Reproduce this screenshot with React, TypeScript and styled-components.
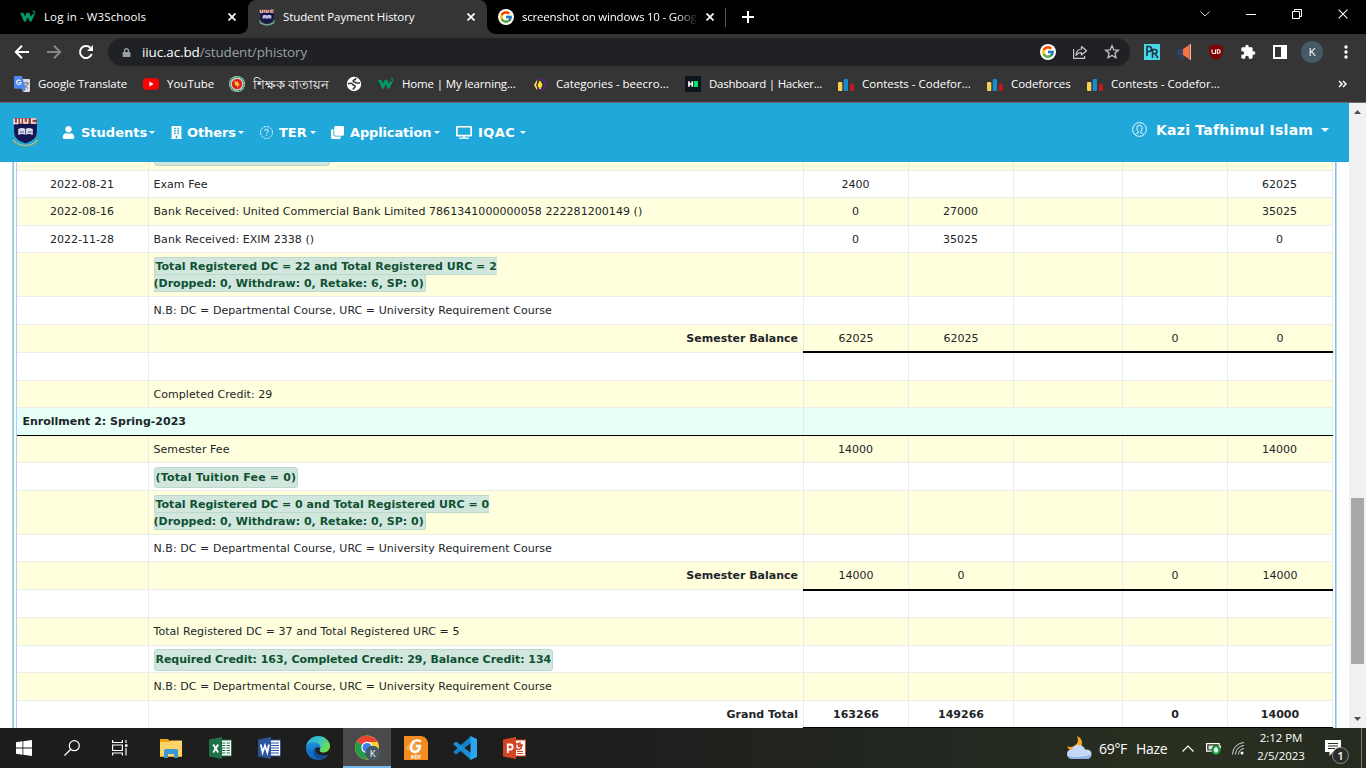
import React from "react";
import styled, { createGlobalStyle } from "styled-components";
import { FcGoogle } from "react-icons/fc";
import { FaUser, FaBuilding, FaClone, FaLock } from "react-icons/fa";
import { MdExtension } from "react-icons/md";

const GlobalStyle = createGlobalStyle`
  * { box-sizing: border-box; }
  body { margin: 0; background: #fff; overflow: hidden; }
`;

const uiFont = `"Open Sans", "Noto Sans", sans-serif`;
const pageFont = `"DejaVu Sans", Verdana, sans-serif`;

const Screen = styled.div`
  width: 1366px;
  height: 768px;
  display: flex;
  flex-direction: column;
  overflow: hidden;
  font-family: ${uiFont};
  svg { display: block; flex: none; }
`;

/* ---------- Browser chrome ---------- */

const TabStrip = styled.div`
  height: 34px;
  flex: none;
  display: flex;
  background: #000;
`;

const Tab = styled.div<{ $width: number; $active?: boolean; $pad: number }>`
  position: relative;
  width: ${(p) => p.$width}px;
  height: 34px;
  padding: 0 0 0 ${(p) => p.$pad}px;
  display: flex;
  align-items: center;
  background: ${(p) => (p.$active ? "#353535" : "transparent")};
  border-radius: 8px 8px 0 0;
  &::before, &::after {
    content: "";
    display: ${(p) => (p.$active ? "block" : "none")};
    position: absolute;
    bottom: 0;
    width: 8px;
    height: 8px;
  }
  &::before { left: -8px; background: radial-gradient(circle at 0 0, #000 7.5px, #353535 8px); }
  &::after { right: -8px; background: radial-gradient(circle at 100% 0, #000 7.5px, #353535 8px); }
`;

const TabTitle = styled.div<{ $width: number; $spacing: number; $fade?: boolean }>`
  width: ${(p) => p.$width}px;
  margin-left: 8px;
  overflow: hidden;
  white-space: nowrap;
  color: #fff;
  font-size: 11.5px;
  line-height: 18px;
  letter-spacing: ${(p) => p.$spacing}px;
  ${(p) => p.$fade && "mask-image: linear-gradient(90deg, #000 88%, transparent);"}
`;

const TabDivider = styled.div`
  width: 1px;
  height: 19px;
  margin: 8px 16px 0 3px;
  background: #555;
`;

const NewTab = styled.div`
  display: flex;
  align-items: center;
  flex: 1;
`;

const WindowControls = styled.div`
  display: flex;
  width: 184px;
  height: 28px;
  & > div { width: 46px; display: flex; align-items: center; justify-content: center; }
`;

const Toolbar = styled.div`
  height: 36px;
  flex: none;
  display: flex;
  align-items: center;
  background: #353535;
  padding-left: 14px;
  gap: 16px;
`;

const AddressBar = styled.div`
  width: 1022px;
  height: 28px;
  margin-left: -2px;
  padding: 0 10px 0 14px;
  border-radius: 14px;
  background: #202124;
  display: flex;
  align-items: center;
`;

const Url = styled.div`
  flex: 1;
  margin-left: 11px;
  color: #9aa0a6;
  font-size: 13.5px;
  letter-spacing: -0.15px;
  line-height: 20px;
  b { font-weight: 400; color: #fff; }
`;

const AddressActions = styled.div`
  display: flex;
  align-items: center;
  gap: 16px;
`;

const Extensions = styled.div`
  display: flex;
  align-items: center;
  gap: 16px;
  margin-left: -2px;
`;

const Avatar = styled.div`
  width: 22px;
  height: 22px;
  margin: 0 -1px 0 -3px;
  border-radius: 50%;
  background: #455a64;
  color: #fff;
  font-size: 11.5px;
  line-height: 22px;
  text-align: center;
`;

const Bookmarks = styled.div`
  height: 33px;
  flex: none;
  display: flex;
  align-items: center;
  gap: 16px;
  padding: 0 19px 4px 14px;
  background: #353535;
  border-bottom: 1px solid #6a6a6a;
`;

const Bookmark = styled.div`
  display: flex;
  align-items: center;
  gap: 8px;
`;

const BookmarkLabel = styled.span<{ $width: number; $spacing: number; $size?: number }>`
  width: ${(p) => p.$width}px;
  white-space: nowrap;
  color: #fff;
  font-size: ${(p) => p.$size ?? 11.5}px;
  line-height: 18px;
  letter-spacing: ${(p) => p.$spacing}px;
`;

const Spacer = styled.div`
  flex: 1;
`;

/* ---------- Web page ---------- */

const Viewport = styled.div`
  height: 625px;
  flex: none;
  display: flex;
  font-family: ${pageFont};
`;

const Page = styled.div`
  width: 1349px;
  height: 625px;
  display: flex;
  flex-direction: column;
  overflow: hidden;
  background: #fff;
`;

const Nav = styled.nav`
  height: 59px;
  flex: none;
  display: flex;
  align-items: center;
  padding: 0 20px 0 12px;
  background: #21a8da;
  color: #fff;
  font-weight: 700;
`;

const NavMenu = styled.div`
  display: flex;
  margin-left: 23px;
`;

const NavItem = styled.div<{ $width: number }>`
  width: ${(p) => p.$width}px;
  height: 18px;
  display: flex;
  align-items: center;
`;

const NavLabel = styled.span<{ $width: number; $gap: number; $spacing?: number }>`
  width: ${(p) => p.$width}px;
  margin-left: ${(p) => p.$gap}px;
  margin-right: 4px;
  font-size: 13px;
  letter-spacing: ${(p) => p.$spacing ?? 0}px;
  white-space: nowrap;
`;

const Caret = styled.span<{ $size: number }>`
  border: ${(p) => p.$size}px solid transparent;
  border-top-color: #fff;
  border-bottom: 0;
`;

const UserMenu = styled.div`
  display: flex;
  align-items: center;
  height: 20px;
  margin-bottom: 6px;
`;

const UserName = styled.span`
  width: 157px;
  margin: 0 8px 0 9px;
  font-size: 14px;
  letter-spacing: 0.23px;
  white-space: nowrap;
`;

const Frame = styled.main`
  width: 1325px;
  height: 566px;
  margin-left: 12px;
  border: solid #c9d3d8;
  border-width: 0 1px;
`;

const FrameInner = styled.div`
  height: 566px;
  padding: 0 2px;
  border: solid #70cbee;
  border-width: 0 1px;
`;

const Table = styled.div`
  height: 566px;
  width: 1317px;
  border-left: 1px solid #bccaf8;
  color: #212529;
  font-size: 11px;
  line-height: 16.5px;
`;

const Row = styled.div<{ $height: number; $tone: Tone }>`
  display: grid;
  grid-template-columns: 132px 655px 105px 105px 109px 105px 105px;
  height: ${(p) => p.$height}px;
  background: ${(p) => ({ white: "#fff", cream: "#ffffdd" })[p.$tone]};
`;

const Cell = styled.div<{ $align?: string; $bold?: boolean; $total?: number; $clip?: boolean }>`
  display: flex;
  align-items: ${(p) => (p.$clip ? "flex-end" : "center")};
  justify-content: ${(p) => p.$align || "center"};
  padding: ${(p) => (p.$clip ? "0 5px 4px 4.5px" : p.$align ? "2px 5px 0 4.5px" : "2px 6px 0 5px")};
  font-weight: ${(p) => (p.$bold ? 700 : 400)};
  letter-spacing: ${(p) => (p.$bold ? 0 : p.$align ? 0.055 : 0)}px;
  border: solid #ececec;
  border-width: 0 1px 1px 0;
  min-width: 0;
  overflow: hidden;
  white-space: nowrap;
  ${(p) =>
    p.$total &&
    "margin-left: -1px; padding: 2px 5px 0; border-right-width: 0; box-shadow: inset -1px 0 #ececec, inset 1px 0 #ececec;"}
  ${(p) => p.$total === 1 && "border-bottom: 2px solid #000; padding-top: 3px;"}
  ${(p) =>
    p.$total === 2 &&
    "border-bottom-color: #000; box-shadow: inset -1px 0 #ececec, inset 1px 0 #ececec, 0 1px #000; position: relative;"}
`;

const SectionRow = styled.div`
  display: grid;
  grid-template-columns: 787px 529px;
  height: 28px;
  background: #e6fff7;
  border-bottom: 1px solid #000;
  font-weight: 700;
  line-height: 27px;
  & > div { padding-left: 5.5px; border-right: 1px solid #e3eeea; }
`;

const Badge = styled.span<{ $spacing?: number }>`
  background: #d1e7dd;
  border: 1px solid #badbcc;
  border-radius: 3px;
  padding: 2px 1px 1px;
  color: #0f5132;
  font-weight: 700;
  letter-spacing: ${(p) => p.$spacing ?? 0}px;
`;

const Scrollbar = styled.div`
  width: 17px;
  height: 625px;
  background: #f1f1f1;
  display: flex;
  flex-direction: column;
  align-items: center;
`;

const ScrollArrow = styled.div<{ $down?: boolean }>`
  width: 17px;
  height: 17px;
  display: flex;
  align-items: center;
  justify-content: center;
  transform: ${(p) => (p.$down ? "rotate(180deg)" : "none")};
`;

const Thumb = styled.div`
  width: 13px;
  height: 166px;
  margin: 378px 0 47px;
  background: #a8a8a8;
`;

/* ---------- Taskbar ---------- */

const Taskbar = styled.div`
  height: 40px;
  flex: none;
  display: flex;
  align-items: stretch;
  background: linear-gradient(90deg, #1d1d1d 0, #1e1e1d 560px, #222620 900px, #2a3020 1200px, #262b20 100%);
  color: #fff;
`;

const TaskButton = styled.div<{ $active?: boolean }>`
  width: 48px;
  margin-right: 1px;
  display: flex;
  align-items: center;
  justify-content: center;
  background: ${(p) => (p.$active ? "#4a4a4a" : "transparent")};
  box-shadow: ${(p) => (p.$active ? "inset 0 -2px #76b9ed" : "none")};
`;

const SystemButtons = styled.div`
  display: flex;
  width: 147px;
  ${TaskButton} { margin-right: 0; }
`;

const Weather = styled.div`
  display: flex;
  align-items: center;
  font-size: 14px;
  letter-spacing: -0.3px;
  span { width: 37px; margin-left: 7px; white-space: nowrap; }
  span + span { margin-left: 0; width: 46px; }
`;

const Tray = styled.div`
  display: flex;
  align-items: center;
`;

const TrayIcons = styled.div`
  display: flex;
  align-items: center;
  gap: 10px;
  margin-left: 11px;
`;

const Clock = styled.div`
  width: 64px;
  margin-left: 4px;
  text-align: center;
  font-size: 11.5px;
  letter-spacing: -0.05px;
  line-height: 18px;
  padding-bottom: 2px;
`;

const Notifications = styled.div`
  position: relative;
  width: 24px;
  height: 24px;
  margin: 8px 12px 0 12px;
`;

const NotificationCount = styled.div`
  position: absolute;
  left: 7px;
  top: 7px;
  width: 17px;
  height: 17px;
  border: 1px solid #8b8b8b;
  border-radius: 50%;
  background: #2b2b2b;
  font-size: 11.5px;
  font-weight: 600;
  line-height: 15px;
  text-align: center;
`;

const ShowDesktop = styled.div`
  width: 5px;
  height: 40px;
  border-left: 1px solid #7b7d76;
`;

/* ---------- Icons ---------- */

const CloseIcon = ({ size = 8, stroke = 1.7 }: { size?: number; stroke?: number }) => (
  <svg width={size} height={size} viewBox="0 0 8 8">
    <path d="M.5.5l7 7M7.5.5l-7 7" stroke="#fff" strokeWidth={stroke} fill="none" />
  </svg>
);

const W3Icon = () => (
  <svg width="16" height="16" viewBox="0 0 16 16">
    <path d="M0 3.800h3.300L5 7.600l1.600-3.800h2.600l1.600 3.800L12.300 5.500l2.400.3-3.500 7h-1.400L7.700 8.300l-2 4.500H4.200z" fill="#059862" />
    <path d="M12.600 2.300h2.600L13.800 3.800c2 .1 1.800 2.400-1 1.700" stroke="#059862" strokeWidth=".9" fill="none" />
  </svg>
);

const Crest = ({ width, height }: { width: number; height: number }) => (
  <svg width={width} height={height} viewBox="0 0 26 31" preserveAspectRatio="none">
    <path d="M0 19q3 3 4 6l9 4 9-4q1-3 4-6l-1.500 8L13 31 1.500 27z" fill="#4f9a85" />
    <path d="M1.500 23q3 5 11.500 5.500Q21.500 28 24.500 23" stroke="#b9dac4" strokeWidth="1.500" strokeDasharray="1.500 1" fill="none" />
    <path d="M2 1h22v14q0 8-11 11.500Q2 23 2 15z" fill="#15164f" />
    <path d="M2 1h22v6H2z" fill="#8f4138" />
    <path d="M2 1.500v5h3.500v-5M8.500 1.500v5M11.500 1.500v4.500h3.500V1.500M23.500 2H19v4h4.500" stroke="#f7e9e6" strokeWidth="1.500" fill="none" />
    <path d="M6 12q4-2 7 0 3-2 7 0v6q-4-2-7 0-3-2-7 0z" fill="#d9dbea" />
    <path d="M13 12v6M7.500 15h4M15 15h4" stroke="#34367a" strokeWidth=".8" />
  </svg>
);

const GoogleDot = () => (
  <svg width="16" height="16" viewBox="0 0 16 16">
    <circle cx="8" cy="8" r="8" fill="#fff" />
    <FcGoogle x="1" y="1" size={14} />
  </svg>
);

const BackIcon = ({ color, flip }: { color: string; flip?: boolean }) => (
  <svg width="16" height="16" viewBox="0 0 16 16">
    <path
      d="M15 8H2M8 1.800L1.800 8 8 14.200"
      stroke={color}
      strokeWidth="2"
      fill="none"
      transform={flip ? "matrix(-1 0 0 1 16 0)" : undefined}
    />
  </svg>
);

const ReloadIcon = () => (
  <svg width="16" height="16" viewBox="0 0 16 16">
    <path d="M13.700 10a6 6 0 1 1-1.400-6.200" stroke="#fff" strokeWidth="2" fill="none" />
    <path d="M15 1v6H9z" fill="#fff" />
  </svg>
);

const ShareIcon = () => (
  <svg width="16" height="16" viewBox="0 0 16 16" fill="none" stroke="#c4c7c5" strokeWidth="1.2">
    <path d="M1.600 5v9.400h11V12" />
    <path d="M9.500 2.500l5 4.300-5 4.200V8.700C7 8.700 5.200 9.500 4 11.400c.3-3.500 2.200-6 5.500-6.400z" strokeLinejoin="round" />
  </svg>
);

const StarIcon = () => (
  <svg width="16" height="16" viewBox="0 0 16 16">
    <path
      d="M8 1.700l1.850 4.200 4.500.45-3.400 3 1 4.450L8 11.500l-3.950 2.300 1-4.450-3.400-3 4.500-.45z"
      fill="none"
      stroke="#c4c7c5"
      strokeWidth="1.300"
    />
  </svg>
);

const PrIcon = () => (
  <svg width="16" height="16" viewBox="0 0 16 16">
    <rect width="16" height="16" fill="#4dd5ea" />
    <path d="M3 12V2.500h2q2.500 0 2.500 2.500T5 7.500H3M8.500 14V5.500h2.200q2.300 0 2.300 2t-2.300 2H8.500m2.500 0l3 4.500" stroke="#17343e" strokeWidth="1.600" fill="none" />
  </svg>
);

const MegaphoneIcon = () => (
  <svg width="16" height="16" viewBox="0 0 16 16">
    <path d="M1.500 5H8v6H7l1 4H5l-1.500-4h-2Q0 8 1.500 5z" fill="#2f4668" />
    <path d="M7 5l6-4v14l-6-4z" fill="#ff7043" />
    <path d="M13.500 0h1.500v16h-1.500z" fill="#ffb199" />
  </svg>
);

const ShieldIcon = () => (
  <svg width="16" height="16" viewBox="0 0 16 16">
    <path d="M8 0q3 2 7 2v5q0 6-7 9-7-3-7-9V2q4 0 7-2z" fill="#800000" />
    <path d="M4 5.500V8q0 1.500 1.500 1.500H7.500V5.500M9.300 5.800h1.200q1.700 0 1.700 1.700t-1.700 1.700H9.300z" stroke="#fff" strokeWidth="1.100" fill="none" />
  </svg>
);

const SidePanelIcon = () => (
  <svg width="16" height="16" viewBox="0 0 16 16">
    <path d="M1 1h14v14H1zM3 3v10h6V3z" fill="#fff" fillRule="evenodd" />
  </svg>
);

const DotsIcon = () => (
  <svg width="16" height="16" viewBox="0 0 16 16" fill="#fff">
    <circle cx="8" cy="3" r="1.700" />
    <circle cx="8" cy="8" r="1.700" />
    <circle cx="8" cy="13" r="1.700" />
  </svg>
);

const TranslateIcon = () => (
  <svg width="16" height="16" viewBox="0 0 16 16">
    <path d="M6 3h9q1 0 1 1v11q0 1-1 1H9z" fill="#dadce0" />
    <path d="M9 7h6M12 6v1M14 7q-1 3.500-4 5M10.500 8.500q1 2.500 3.500 4" stroke="#70777d" fill="none" />
    <path d="M1 0h7l3.500 12.800H1q-1 0-1-1V1q0-1 1-1z" fill="#4a87ee" />
    <path d="M9 12.800h2.500L9.500 16z" fill="#3467d6" />
    <path d="M6.500 4.800A2.200 2.200 0 1 0 7 6.500H5" stroke="#fff" fill="none" strokeWidth="1.100" />
  </svg>
);

const YouTubeIcon = () => (
  <svg width="16" height="16" viewBox="0 0 16 16">
    <rect y="2.300" width="16" height="11.500" rx="3" fill="#f00" />
    <path d="M6.400 5.600v4.900L10.600 8z" fill="#fff" />
  </svg>
);

const SealIcon = () => (
  <svg width="16" height="16" viewBox="0 0 16 16">
    <circle cx="8" cy="8" r="8" fill="#d7e8dd" />
    <circle cx="8" cy="8" r="6.900" fill="none" stroke="#25865b" strokeWidth="1.300" strokeDasharray="2 .5" />
    <circle cx="8" cy="8" r="5.300" fill="#df2026" />
    <path d="M5.500 4.500l2 1.500 1.500-.5.500 2 1.500 1-1.500 1-1 2-1-2-1.500-.5z" fill="#f4cb22" />
  </svg>
);

const GlobeIcon = () => (
  <svg width="16" height="16" viewBox="0 0 16 16">
    <circle cx="8" cy="8" r="7.200" fill="#fff" />
    <path d="M2 8q3-1.500 4.500 0 .5 1.500 2 1.500 1.500 1-.5 2.500l-1 1.500M9.500 2q.5 1.500-1 1.800-2 .5-1 2 2 0 2.500 1.200h4" stroke="#353535" strokeWidth="1.600" fill="none" />
  </svg>
);

const BeeIcon = () => (
  <svg width="16" height="16" viewBox="0 0 16 16">
    <path d="M7 3.500h4.500L14 8.500l-2.500 5H7" fill="none" stroke="#5b2386" strokeWidth="1.500" />
    <path d="M5 4.500L2.500 9 5 13.500M8 5l-2 4 2 4 2-4z" fill="#ffe135" stroke="#ffe135" strokeWidth="1" />
    <path d="M6.500 5L4.500 9l2 4" stroke="#5b2386" fill="none" />
  </svg>
);

const HackerRankIcon = () => (
  <svg width="16" height="16" viewBox="0 0 16 16">
    <rect width="16" height="16" fill="#0e141e" />
    <path d="M4 5.200v5.600M7.300 5.200v5.600M4 8h3.300" stroke="#fff" strokeWidth="1.700" />
    <rect x="9" y="5" width="4" height="6" fill="#00ea64" />
  </svg>
);

const BarsIcon = () => (
  <svg width="16" height="16" viewBox="0 0 16 16">
    <rect x="0" y="6" width="4.300" height="9" rx="1" fill="#f6cf55" />
    <rect x="5.700" y="3" width="4.300" height="12" rx="1" fill="#198bd0" />
    <rect x="11.700" y="7.500" width="4.300" height="7.500" rx="1" fill="#b71c24" />
  </svg>
);

const DashedQuestionIcon = () => (
  <svg width="13" height="13" viewBox="0 0 13 13" fill="none" stroke="#fff">
    <circle cx="6.500" cy="6.500" r="6" strokeWidth=".9" strokeDasharray="2.200 .9" />
    <path d="M4.700 5q0-1.700 1.800-1.700T8.300 5q0 1-1.100 1.500-.7.400-.7 1.200M6.500 8.900v1" strokeWidth=".9" />
  </svg>
);

const DesktopIcon = () => (
  <svg width="16" height="13" viewBox="0 0 16 13">
    <path d="M1 0h14q1 0 1 1v8.500q0 1-1 1H1q-1 0-1-1V1q0-1 1-1zm.700 1.600v7.200h12.600V1.600z" fill="#fff" fillRule="evenodd" />
    <path d="M7 10h2v1.500h4V13H3v-1.500h4z" fill="#d9f0fa" />
  </svg>
);

const UserCircleIcon = () => (
  <svg width="15" height="15" viewBox="0 0 15 15" fill="none" stroke="#fff" strokeWidth=".9">
    <circle cx="7.500" cy="7.500" r="6.900" />
    <path d="M3.500 12.500q.500-1.200 2.800-1.700v-1Q4.900 8.500 4.900 5.800q0-2.600 2.600-2.600t2.600 2.600q0 2.700-1.400 4v1q2.300.500 2.800 1.700" />
  </svg>
);

const FolderIcon = () => (
  <svg width="22" height="20" viewBox="0 0 22 20">
    <path d="M0 1h8l2 2h12v16H0z" fill="#e9a60e" />
    <path d="M0 4h9l2-1.500h11V18H0z" fill="#fdd367" />
    <path d="M4 20v-7q0-2 2-2h10q2 0 2 2v7h-4v-4H8v4z" fill="#3a97dc" />
  </svg>
);

const OfficeIcon = ({ kind }: { kind: "X" | "W" | "P" }) => {
  const color = { X: "#1f7145", W: "#2a5699", P: "#d24625" }[kind];
  const letter = {
    X: "M4.200 7.500l5 8M9.200 7.500l-5 8",
    W: "M2.800 7.500l1.800 8L7 8.500l2.300 7 1.700-8",
    P: "M4.800 16V7.500h2.500q2.400 0 2.400 2.500T7.300 12.500H4.800",
  }[kind];
  return (
    <svg width="23" height="22" viewBox="0 0 23 22">
      <rect x="11" y="3" width="11.500" height="16" fill="#fff" stroke={color} />
      {kind === "P" ? (
        <>
          <path d="M15.500 6.500a3 3 0 1 0 3 3h-3zM17 5v3h3" fill="none" stroke={color} strokeWidth="1.400" />
          <path d="M14 14.500h6M14 16.500h6" stroke={color} />
        </>
      ) : (
        <path d="M13 6h8M13 8.500h8M13 11h8M13 13.500h8M13 16h8" stroke={color} strokeWidth="1.200" />
      )}
      {kind === "X" && <path d="M17 4v14" stroke="#fff" />}
      <path d="M0 2.500L13 0v22L0 19.500z" fill={color} />
      <path d={letter} stroke="#fff" strokeWidth="1.800" fill="none" />
    </svg>
  );
};

const EdgeIcon = () => (
  <svg width="24" height="24" viewBox="0 0 24 24">
    <defs>
      <linearGradient id="edgeTop" x1="0" y1="0" x2="1" y2=".5">
        <stop offset="0" stopColor="#2aa7e4" />
        <stop offset=".55" stopColor="#35c1c8" />
        <stop offset="1" stopColor="#6fe04f" />
      </linearGradient>
      <linearGradient id="edgeSide" x1="0" y1="0" x2="0" y2="1">
        <stop offset="0" stopColor="#1b8fdc" />
        <stop offset="1" stopColor="#0b61b8" />
      </linearGradient>
    </defs>
    <path d="M0 11C1 4 6 0 12 0c7 0 12 5 12 10 0 4-3 6.500-6.500 6.500-3.500 0-4.500-1.500-3.500-3C15 10 13 7 8.500 7 4 7 1 9 0 11z" fill="url(#edgeTop)" />
    <path d="M0 12C0 8 4 6 8.500 6.500c4 .2 6.200 3 6 5.500-4-2.500-7 1-5.500 5 2 4.500 8 5 13 2C20 22.500 16 24 12 24 5 24 0 19 0 12z" fill="url(#edgeSide)" />
    <path d="M9.500 11.500C5 16 8 22 13.500 23.500c4-.3 7-2 8.800-5C16.500 21 8 18.500 9.500 11.500z" fill="#134b91" />
  </svg>
);

const ChromeIcon = () => (
  <svg width="26" height="26" viewBox="-1 0 26 26">
    <circle cx="12" cy="12.500" r="12" fill="#fdd134" />
    <path d="M12 12.500L1.600 6.500a12 12 0 0 1 20.800 0.500H12z" fill="#ea4335" />
    <path d="M1.600 6.500A12 12 0 0 0 11 24.400L17 15.500l-5-3z" fill="#239b4c" />
    <circle cx="12" cy="12.500" r="5.700" fill="#fff" />
    <circle cx="12" cy="12.500" r="4.500" fill="#3b7ded" />
    <circle cx="17.700" cy="18.300" r="7.500" fill="#455a64" />
    <text x="17.700" y="21.800" fill="#fff" fontSize="9.500" textAnchor="middle">K</text>
  </svg>
);

const FoxitIcon = () => (
  <svg width="24" height="24" viewBox="0 0 24 24">
    <path d="M0 0h18l6 6v18H0z" fill="#f58a1f" />
    <path d="M19.500 0L24 4.500h-4.500z" fill="#f58a1f" />
    <path d="M1 12l8-8 9 9-6 6z" fill="#f9a653" />
    <path d="M17 5.500q-6-3-9 2-3 7 2.500 8.500 4.500 0 5.500-6h-4" stroke="#fff" strokeWidth="2.400" fill="none" />
    <text x="12" y="22.500" fill="#fff" fontSize="5.500" fontWeight="700" textAnchor="middle">PDF</text>
  </svg>
);

const VsCodeIcon = () => (
  <svg width="24" height="24" viewBox="0 0 24 24">
    <path d="M18 0v7L3 18.500 0 16z" fill="#1480c8" />
    <path d="M18 24v-7L3 5.500 0 8z" fill="#1b8fd6" />
    <path d="M17.500 0L24 3v18l-6.500 3z" fill="#2aa5ee" />
  </svg>
);

const MoonCloudIcon = () => (
  <svg width="25" height="24" viewBox="0 0 25 24">
    <path d="M10 0q3 7-3 10-3 1.500-7 .5Q2 15 8 15q7-1 7-8 0-5-5-7z" fill="#f5a623" />
    <path d="M5.500 23q-5.500-.5-5.500-5t5-4.500Q6.500 8.500 12 9q5 .5 6 4.500 6.500-.500 6.500 4.500 0 4.500-4.500 5z" fill="#c3d8f8" />
    <path d="M1 20q5 2 12 1t11-2.500Q23.500 23 20 23H5.500Q2 23 1 20z" fill="#8fb4ec" />
  </svg>
);

const BatteryIcon = () => (
  <svg width="16" height="14" viewBox="0 0 16 14">
    <path d="M1.600 2.600h12.500v7.500H1.600z" fill="none" stroke="#fff" strokeWidth="1.200" />
    <path d="M3.500 4.500h5v4h-5zM14.500 4.500H16v3h-1.500z" fill="#dfe3dc" />
    <circle cx="11" cy="9" r="4.700" fill="#169b3c" />
    <path d="M11 6q4 3.500 0 5.500-4-2.500 0-5.500zM11 8v4.500" fill="#fff" stroke="#fff" strokeWidth=".6" />
  </svg>
);

const WifiIcon = () => (
  <svg width="14" height="14" viewBox="0 0 14 14" fill="none" stroke="#d5d7d2">
    <path d="M1.500 13.500A12 12 0 0 1 13 1.500M4.500 13.500a9 9 0 0 1 8.500-9M7.500 13.500a6 6 0 0 1 5.500-6" />
    <circle cx="11" cy="12" r="1.500" fill="#fff" stroke="none" />
  </svg>
);

/* ---------- Data ---------- */

type Tone = "white" | "cream";

interface Entry {
  height: number;
  tone: Tone;
  date?: string;
  text?: React.ReactNode;
  values?: string[];
  summary?: boolean;
  total?: number;
  bold?: boolean;
  clip?: boolean;
}

const note = "N.B: DC = Departmental Course, URC = University Requirement Course";

const firstEntries: Entry[] = [
  { height: 9, tone: "cream", text: <Badge $spacing={0.2}>(Total Tuition Fee = 45625)</Badge>, clip: true },
  { height: 27, tone: "white", date: "2022-08-21", text: "Exam Fee", values: ["2400", "", "", "", "62025"] },
  {
    height: 28, tone: "cream", date: "2022-08-16",
    text: "Bank Received: United Commercial Bank Limited 7861341000000058 222281200149 ()",
    values: ["0", "27000", "", "", "35025"],
  },
  { height: 27, tone: "white", date: "2022-11-28", text: "Bank Received: EXIM 2338 ()", values: ["0", "35025", "", "", "0"] },
  {
    height: 44, tone: "cream",
    text: (
      <div>
        <Badge $spacing={0.01}>
          Total Registered DC = 22 and Total Registered URC = 2<br />
          (Dropped: 0, Withdraw: 0, Retake: 6, SP: 0)
        </Badge>
      </div>
    ),
  },
  { height: 28, tone: "white", text: note },
  { height: 28, tone: "cream", text: "Semester Balance", summary: true, total: 1, values: ["62025", "62025", "", "0", "0"] },
  { height: 28, tone: "white" },
  { height: 27, tone: "cream", text: "Completed Credit: 29" },
];

const secondEntries: Entry[] = [
  { height: 27, tone: "cream", text: "Semester Fee", values: ["14000", "", "", "", "14000"] },
  { height: 28, tone: "white", text: <Badge $spacing={0.18}>(Total Tuition Fee = 0)</Badge> },
  {
    height: 44, tone: "cream",
    text: (
      <div>
        <Badge $spacing={0.01}>
          Total Registered DC = 0 and Total Registered URC = 0<br />
          (Dropped: 0, Withdraw: 0, Retake: 0, SP: 0)
        </Badge>
      </div>
    ),
  },
  { height: 27, tone: "white", text: note },
  { height: 28, tone: "cream", text: "Semester Balance", summary: true, total: 2, values: ["14000", "0", "", "0", "14000"] },
  { height: 28, tone: "white" },
  { height: 28, tone: "cream", text: "Total Registered DC = 37 and Total Registered URC = 5" },
  { height: 27, tone: "white", text: <Badge $spacing={-0.05}>Required Credit: 163, Completed Credit: 29, Balance Credit: 134</Badge> },
  { height: 28, tone: "cream", text: note },
  { height: 28, tone: "white", text: "Grand Total", summary: true, total: 1, bold: true, values: ["163266", "149266", "", "0", "14000"] },
];

const EntryRow = ({ entry }: { entry: Entry }) => (
  <Row $height={entry.height} $tone={entry.tone}>
    <Cell>{entry.date}</Cell>
    <Cell $align={entry.summary ? "flex-end" : "flex-start"} $bold={entry.summary} $clip={entry.clip}>
      {entry.text}
    </Cell>
    {[0, 1, 2, 3, 4].map((i) => (
      <Cell key={i} $total={entry.total} $bold={entry.bold}>
        {entry.values?.[i]}
      </Cell>
    ))}
  </Row>
);

const bookmarks: { icon: React.ReactNode; label?: string; width?: number; spacing?: number; size?: number }[] = [
  { icon: <TranslateIcon />, label: "Google Translate", width: 89, spacing: -0.1 },
  { icon: <YouTubeIcon />, label: "YouTube", width: 46, spacing: 0 },
  { icon: <SealIcon />, label: "শিক্ষক বাতায়ন", width: 77, spacing: 0, size: 13.2 },
  { icon: <GlobeIcon /> },
  { icon: <W3Icon />, label: "Home | My learning...", width: 114, spacing: -0.15 },
  { icon: <BeeIcon />, label: "Categories - beecro...", width: 113, spacing: 0 },
  { icon: <HackerRankIcon />, label: "Dashboard | Hacker...", width: 113, spacing: -0.25 },
  { icon: <BarsIcon />, label: "Contests - Codefor...", width: 109, spacing: 0 },
  { icon: <BarsIcon />, label: "Codeforces", width: 60, spacing: -0.1 },
  { icon: <BarsIcon />, label: "Contests - Codefor...", width: 109, spacing: 0 },
];

const menu = [
  { icon: <FaUser size={13} />, label: "Students", item: 108, gap: 6, width: 64 },
  { icon: <FaBuilding size={13} />, label: "Others", item: 90, gap: 4, width: 47, spacing: -0.1 },
  { icon: <DashedQuestionIcon />, label: "TER", item: 71, gap: 6, width: 27 },
  { icon: <FaClone size={13} />, label: "Application", item: 125, gap: 6, width: 80, spacing: -0.15 },
  { icon: <DesktopIcon />, label: "IQAC", item: 80, gap: 6, width: 38, spacing: 0.4 },
];

export default function App() {
  return (
    <Screen>
      <GlobalStyle />
      <TabStrip>
        <Tab $width={248} $pad={20}>
          <W3Icon />
          <TabTitle $width={184} $spacing={0.12}>Log in - W3Schools</TabTitle>
          <CloseIcon />
        </Tab>
        <Tab $width={239} $pad={11} $active>
          <Crest width={16} height={17} />
          <TabTitle $width={184} $spacing={-0.1}>Student Payment History</TabTitle>
          <CloseIcon />
        </Tab>
        <Tab $width={235} $pad={11}>
          <GoogleDot />
          <TabTitle $width={176} $spacing={-0.2} $fade>screenshot on windows 10 - Google Search</TabTitle>
          <Spacer />
          <CloseIcon />
          <Spacer />
        </Tab>
        <TabDivider />
        <NewTab>
          <svg width="12" height="12" viewBox="0 0 12 12">
            <path d="M6 0v12M0 6h12" stroke="#fff" strokeWidth="2" />
          </svg>
        </NewTab>
        <WindowControls>
          <div>
            <svg width="10" height="6" viewBox="0 0 10 6"><path d="M.5.500L5 5 9.500.500" stroke="#ccc" fill="none" /></svg>
          </div>
          <div>
            <svg width="10" height="2" viewBox="0 0 10 2"><path d="M0 1.500h10" stroke="#fff" /></svg>
          </div>
          <div>
            <svg width="10" height="10" viewBox="0 0 10 10"><path d="M.5 2.500h7v7h-7zM2.500 2.500v-2h7v7h-2" stroke="#fff" fill="none" /></svg>
          </div>
          <div><CloseIcon size={10} stroke={0.9} /></div>
        </WindowControls>
      </TabStrip>
      <Toolbar>
        <BackIcon color="#fff" />
        <BackIcon color="#858585" flip />
        <ReloadIcon />
        <AddressBar>
          <FaLock size={9} color="#9aa0a6" />
          <Url><b>iiuc.ac.bd</b>/student/phistory</Url>
          <AddressActions>
            <GoogleDot />
            <ShareIcon />
            <StarIcon />
          </AddressActions>
        </AddressBar>
        <Extensions>
          <PrIcon />
          <MegaphoneIcon />
          <ShieldIcon />
          <MdExtension size={16} color="#fff" />
          <SidePanelIcon />
          <Avatar>K</Avatar>
          <DotsIcon />
        </Extensions>
      </Toolbar>
      <Bookmarks>
        {bookmarks.map((b, i) => (
          <Bookmark key={i}>
            {b.icon}
            {b.label && <BookmarkLabel $width={b.width!} $spacing={b.spacing!} $size={b.size}>{b.label}</BookmarkLabel>}
          </Bookmark>
        ))}
        <Spacer />
        <svg width="9" height="8" viewBox="0 0 9 8">
          <path d="M1 1l3 3-3 3M5 1l3 3-3 3" stroke="#fff" strokeWidth="1.500" fill="none" />
        </svg>
      </Bookmarks>

      <Viewport>
        <Page>
          <Nav>
            <Crest width={27} height={31} />
            <NavMenu>
              {menu.map((m) => (
                <NavItem key={m.label} $width={m.item}>
                  {m.icon}
                  <NavLabel $width={m.width} $gap={m.gap} $spacing={m.spacing}>{m.label}</NavLabel>
                  <Caret $size={3} />
                </NavItem>
              ))}
            </NavMenu>
            <Spacer />
            <UserMenu>
              <UserCircleIcon />
              <UserName>Kazi Tafhimul Islam</UserName>
              <Caret $size={4} />
            </UserMenu>
          </Nav>
          <Frame>
            <FrameInner>
              <Table>
                {firstEntries.map((e, i) => <EntryRow key={i} entry={e} />)}
                <SectionRow>
                  <div>Enrollment 2: Spring-2023</div>
                  <div />
                </SectionRow>
                {secondEntries.map((e, i) => <EntryRow key={i} entry={e} />)}
              </Table>
            </FrameInner>
          </Frame>
        </Page>
        <Scrollbar>
          <ScrollArrow>
            <svg width="7" height="4" viewBox="0 0 7 4"><path d="M0 4l3.500-4L7 4z" fill="#505050" /></svg>
          </ScrollArrow>
          <Thumb />
          <ScrollArrow $down>
            <svg width="7" height="4" viewBox="0 0 7 4"><path d="M0 4l3.500-4L7 4z" fill="#505050" /></svg>
          </ScrollArrow>
        </Scrollbar>
      </Viewport>

      <Taskbar>
        <SystemButtons>
          <TaskButton>
            <svg width="16" height="16" viewBox="0 0 16 16">
              <path d="M0 2.200L6.500 1.300v6.200H0zM7.300 1.200L16 0v7.500H7.300zM0 8.400h6.500v6.300L0 13.800zM7.300 8.400H16V16l-8.700-1.200z" fill="#fff" />
            </svg>
          </TaskButton>
          <TaskButton>
            <svg width="16" height="16" viewBox="0 0 16 16">
              <circle cx="10.300" cy="5.700" r="5" stroke="#fff" strokeWidth="1.200" fill="none" />
              <path d="M6.800 9.200L.5 15.500" stroke="#fff" strokeWidth="1.300" />
            </svg>
          </TaskButton>
          <TaskButton>
            <svg width="16" height="16" viewBox="0 0 16 16">
              <path d="M.6 0v2.500h9.800V0M.6 5h9.800v5.500H.6zM.6 15.500V13h9.800v2.500M14 0v3M14 8v7.500" stroke="#fff" strokeWidth="1.200" fill="none" />
              <path d="M13 4.300h2.500v2.500H13z" fill="#fff" />
            </svg>
          </TaskButton>
        </SystemButtons>
        <TaskButton><FolderIcon /></TaskButton>
        <TaskButton><OfficeIcon kind="X" /></TaskButton>
        <TaskButton><OfficeIcon kind="W" /></TaskButton>
        <TaskButton><EdgeIcon /></TaskButton>
        <TaskButton $active><ChromeIcon /></TaskButton>
        <TaskButton><FoxitIcon /></TaskButton>
        <TaskButton><VsCodeIcon /></TaskButton>
        <TaskButton><OfficeIcon kind="P" /></TaskButton>
        <Spacer />
        <Weather>
          <MoonCloudIcon />
          <span>69°F</span>
          <span>Haze</span>
        </Weather>
        <Tray>
          <svg width="12" height="7" viewBox="0 0 12 7"><path d="M.5 6.500L6 1l5.500 5.500" stroke="#fff" strokeWidth="1.200" fill="none" /></svg>
          <TrayIcons>
            <BatteryIcon />
            <WifiIcon />
          </TrayIcons>
          <Clock>
            2:12 PM<br />2/5/2023
          </Clock>
          <Notifications>
            <svg width="16" height="16" viewBox="0 0 16 16">
              <path d="M0 0h16v12H8l-3.500 4v-4H0z" fill="#fff" />
              <path d="M3 3.500h10M3 6h10M3 8.500h7" stroke="#2a2f22" strokeWidth="1" />
            </svg>
            <NotificationCount>1</NotificationCount>
          </Notifications>
          <ShowDesktop />
        </Tray>
      </Taskbar>
    </Screen>
  );
}
